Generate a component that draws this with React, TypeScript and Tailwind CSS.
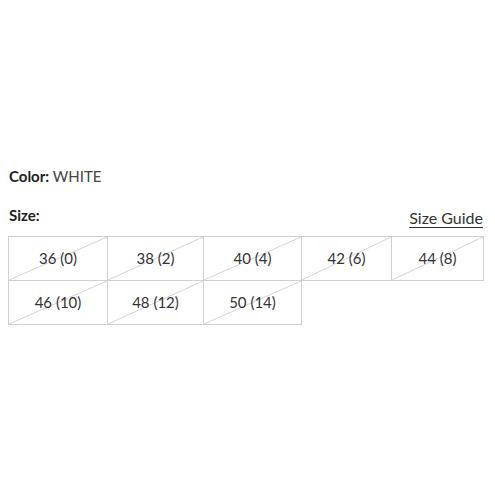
import React from "react";

const SIZES = ["36 (0)", "38 (2)", "40 (4)", "42 (6)", "44 (8)", "46 (10)", "48 (12)", "50 (14)"];

function SizeCell({ label, index }: { label: string; index: number }) {
  const firstCol = index % 5 === 0;
  const firstRow = index < 5;
  return (
    <div
      className={`relative flex items-center justify-center border-r border-b border-[#cfcfcf] ${
        firstCol ? "border-l" : ""
      } ${firstRow ? "border-t h-[45px]" : "h-[44px]"}`}
    >
      {/* sold-out slash */}
      <svg className="absolute inset-0 h-full w-full" viewBox="0 0 100 100" preserveAspectRatio="none">
        <line x1="0" y1="100" x2="100" y2="0" stroke="#d4d4d4" strokeWidth="1" vectorEffect="non-scaling-stroke" />
      </svg>
      <span className="relative text-[15px] text-[#333]">{label}</span>
    </div>
  );
}

export default function App() {
  return (
    <div className="h-[495px] w-[495px] bg-white font-['Lato',sans-serif] text-[#222]">
      <div className="px-[9px] pt-[166px]">
        <p className="text-[15px] leading-[20px]">
          <span className="font-bold">Color:</span> <span className="text-[#444]">WHITE</span>
        </p>
        <div className="mt-[19px] flex items-end justify-between pr-[3px]">
          <p className="text-[15px] font-bold leading-[20px]">Size:</p>
          <a className="text-[16px] leading-[20px] text-[#333] underline underline-offset-[3px] translate-y-[3px]">Size Guide</a>
        </div>
      </div>
      <div className="mt-[11px] ml-[8px] grid grid-cols-[100px_96px_98px_90px_92px]">
        {SIZES.map((s, i) => (
          <SizeCell key={s} label={s} index={i} />
        ))}
      </div>
    </div>
  );
}
